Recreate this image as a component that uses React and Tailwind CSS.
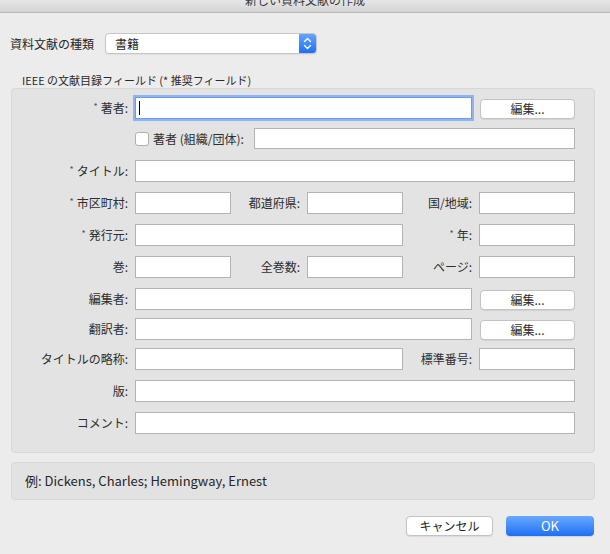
import React from "react";

const font = { fontFamily: '"Noto Sans CJK JP", "Noto Sans", sans-serif' };

const Star = () => (
  <span className="relative -top-[2px] mr-[3px] text-[9px] leading-none text-[#555]">*</span>
);

const Label = ({ children, star, w = "w-[76px]" }) => (
  <div className={`${w} flex h-[22px] shrink-0 items-center justify-end pr-[7px] text-[12px] leading-[22px] text-[#2e2e2e]`}>
    {star && <Star />}
    <span>{children}</span>
  </div>
);

const Input = ({ w = "flex-1", h = "h-[22px]" }) => (
  <div className={`${w} ${h} shrink-0 border border-[#b3b3b3] bg-white`} />
);

const EditButton = () => (
  <button className="mt-[2px] ml-[8px] h-[20px] w-[95px] shrink-0 rounded-[4px] border border-[#c3c3c3] bg-white text-[12px] leading-[18px] text-[#2e2e2e] shadow-[0_1px_1px_rgba(0,0,0,0.08)]">
    編集...
  </button>
);

const Row = ({ children, mt = "mt-[10px]" }) => (
  <div className={`flex h-[22px] items-start ${mt}`}>{children}</div>
);

export default function App() {
  return (
    <div className="flex h-[554px] w-[610px] flex-col bg-[#ececec]" style={font}>
      {/* title bar */}
      <div className="h-[13px] shrink-0 overflow-hidden border-b border-[#b9b9b9] bg-linear-to-b from-[#e6e6e6] to-[#d4d4d4] text-center">
        <div className="-mt-[7px] text-[12px] leading-[14px] text-[#3a3a3a]">新しい資料文献の作成</div>
      </div>

      {/* type popup */}
      <div className="mt-[20px] flex h-[21px] items-center">
        <div className="w-[105px] shrink-0 pl-[10px] text-[12px] leading-[21px] text-[#262626]">資料文献の種類</div>
        <div className="flex h-[21px] w-[212px] overflow-hidden rounded-[4px] border border-[#c6c6c6] bg-white shadow-[0_1px_1px_rgba(0,0,0,0.06)]">
          <div className="flex-1 pl-[9px] text-[12px] leading-[19px] text-[#262626]">書籍</div>
          <div className="flex w-[17px] items-center justify-center bg-linear-to-b from-[#62a5fc] to-[#1f6ff5]">
            <svg width="9" height="13" viewBox="0 0 9 13" fill="none" stroke="white" strokeWidth="1.4" strokeLinecap="round" strokeLinejoin="round">
              <path d="M1.5 4.5 L4.5 1.5 L7.5 4.5" />
              <path d="M1.5 8.5 L4.5 11.5 L7.5 8.5" />
            </svg>
          </div>
        </div>
      </div>

      {/* section label */}
      <div className="mt-[19px] h-[14px] pl-[22px] text-[11px] leading-[14px] text-[#2a2a2a]">
        IEEE の文献目録フィールド (* 推奨フィールド)
      </div>

      {/* group box */}
      <div className="mt-[1px] ml-[11px] w-[584px] rounded-[4px] border border-[#d8d8d8] bg-[#e3e3e3] pt-[8px] pr-[19px] pb-[18px]">
        <Row mt="mt-0">
          <Label star w="w-[123px]">著者:</Label>
          <div className="relative h-[22px] w-[337px] shrink-0 border border-[#6d9ce9] bg-white shadow-[0_0_0_2px_#8eb5f1]">
            <div className="absolute top-[3px] left-[3px] h-[14px] w-px bg-black" />
          </div>
          <EditButton />
        </Row>
        <Row mt="mt-[9px]">
          <div className="w-[123px] shrink-0" />
          <div className="mt-[4px] h-[14px] w-[14px] shrink-0 rounded-[3px] border border-[#b0b0b0] bg-white" />
          <div className="h-[22px] w-[105px] shrink-0 pl-[4px] text-[12px] leading-[22px] text-[#2e2e2e]">著者 (組織/団体):</div>
          <Input h="h-[21px]" />
        </Row>
        <Row>
          <Label star w="w-[123px]">タイトル:</Label>
          <Input />
        </Row>
        <Row>
          <Label star w="w-[123px]">市区町村:</Label>
          <Input w="w-[96px]" />
          <Label>都道府県:</Label>
          <Input w="w-[96px]" />
          <Label>国/地域:</Label>
          <Input w="w-[96px]" />
        </Row>
        <Row>
          <Label star w="w-[123px]">発行元:</Label>
          <Input w="w-[268px]" />
          <Label star>年:</Label>
          <Input w="w-[96px]" />
        </Row>
        <Row>
          <Label w="w-[123px]">巻:</Label>
          <Input w="w-[96px]" />
          <Label>全巻数:</Label>
          <Input w="w-[96px]" />
          <Label>ページ:</Label>
          <Input w="w-[96px]" />
        </Row>
        <Row>
          <Label w="w-[123px]">編集者:</Label>
          <Input w="w-[337px]" />
          <EditButton />
        </Row>
        <Row mt="mt-[8px]">
          <Label w="w-[123px]">翻訳者:</Label>
          <Input w="w-[337px]" />
          <EditButton />
        </Row>
        <Row mt="mt-[8px]">
          <Label w="w-[123px]">タイトルの略称:</Label>
          <Input w="w-[268px]" />
          <Label>標準番号:</Label>
          <Input w="w-[96px]" />
        </Row>
        <Row>
          <Label w="w-[123px]">版:</Label>
          <Input />
        </Row>
        <Row>
          <Label w="w-[123px]">コメント:</Label>
          <Input />
        </Row>
      </div>

      {/* example */}
      <div className="mt-[9px] ml-[11px] flex h-[38px] w-[584px] items-center rounded-[4px] border border-[#d8d8d8] bg-[#e2e2e2] pl-[13px] text-[13px] text-[#262626]">
        例: Dickens, Charles; Hemingway, Ernest
      </div>

      {/* buttons */}
      <div className="mt-[16px] flex justify-end gap-[13px] pr-[16px]">
        <button className="h-[20px] w-[87px] rounded-[4px] border border-[#c3c3c3] bg-white text-[12px] leading-[18px] text-[#262626] shadow-[0_1px_1px_rgba(0,0,0,0.08)]">
          キャンセル
        </button>
        <button className="h-[20px] w-[88px] rounded-[4px] bg-linear-to-b from-[#67a9fc] to-[#1d6ef5] text-[13px] leading-[20px] text-white shadow-[0_1px_1px_rgba(0,0,0,0.12)]">
          OK
        </button>
      </div>
    </div>
  );
}
